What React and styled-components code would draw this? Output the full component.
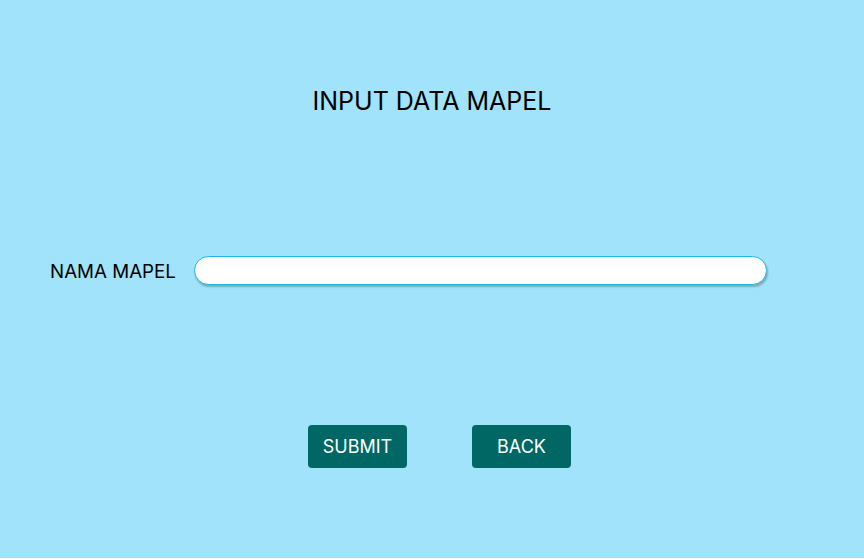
import React from 'react';
import styled, { createGlobalStyle } from 'styled-components';

const GlobalStyle = createGlobalStyle`
    html, body {
        margin: 0;
        padding: 0;
        background: #ffffff;
    }
    body {
        font-family: Inter, 'Liberation Sans', sans-serif;
    }
`;

const Page = styled.div`
    height: 558px;
    background: #a0e3fa;
    display: flex;
    flex-direction: column;
    align-items: center;
    color: #000000;
`;

const Title = styled.h1`
    margin: 86px 0 0;
    font-size: 25px;
    font-weight: 400;
    line-height: 30px;
`;

const Row = styled.div`
    align-self: stretch;
    display: flex;
    align-items: center;
    margin-top: 140px;
    padding-left: 50px;
`;

const Label = styled.label`
    width: 144px;
    margin-top: 3px;
    font-size: 18.75px;
    line-height: 22px;
`;

const Input = styled.input`
    box-sizing: border-box;
    width: 573px;
    height: 29px;
    border: 1px solid #19b9ea;
    border-radius: 15px;
    background: #ffffff;
    box-shadow: 1px 2px 2px rgba(0, 0, 0, 0.25);
    padding: 0 14px;
    font-family: inherit;
    font-size: 16px;
    outline: none;
`;

const Buttons = styled.div`
    display: flex;
    gap: 65px;
    margin-top: 140px;
    margin-left: 15px;
`;

const Button = styled.button`
    width: 99px;
    height: 43px;
    border: none;
    border-radius: 4px;
    background: #006764;
    color: #ffffff;
    font-family: inherit;
    font-size: 18px;
    cursor: pointer;
`;

const App = () => (
    <>
        <GlobalStyle />
        <Page>
            <Title>INPUT DATA MAPEL</Title>
            <Row>
                <Label htmlFor="mapel">NAMA MAPEL</Label>
                <Input id="mapel" type="text" />
            </Row>
            <Buttons>
                <Button>SUBMIT</Button>
                <Button>BACK</Button>
            </Buttons>
        </Page>
    </>
);

export default App;
